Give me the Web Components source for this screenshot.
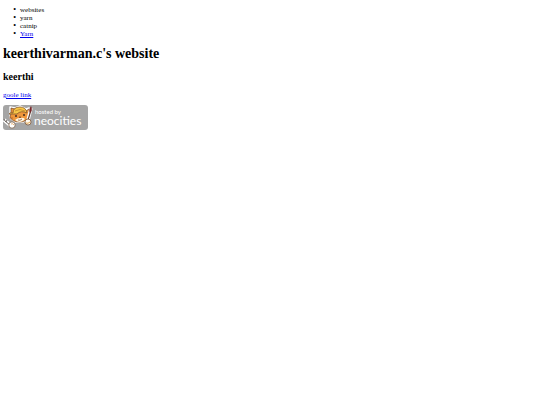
<!DOCTYPE html>
<html lang="en">
<head>
<meta charset="utf-8">
<title>keerthivarman.c's website</title>
<style>
  body {
    margin: 6px 3px;
    background: #fff;
    color: #000;
    font: 7px/8px "Liberation Serif", "Times New Roman", serif;
  }
</style>
</head>
<body>
<home-page>
  <topic-list slot="topics"></topic-list>
  <span slot="title">keerthivarman.c's website</span>
  <span slot="subtitle">keerthi</span>
  <neocities-badge slot="badge"></neocities-badge>
</home-page>

<script>
class TopicList extends HTMLElement {
  constructor() {
    super();
    this.attachShadow({ mode: "open" });
    this.shadowRoot.innerHTML = `
      <style>
        :host { display: block; }
        ul { margin: 0; padding-left: 17px; list-style-type: "•\u00a0\u00a0"; }
        li::marker { font-size: 8px; }
        a { color: #0000ee; }
      </style>
      <ul>
        <li>websites</li>
        <li>yarn</li>
        <li>catnip</li>
        <li><a href="#yarn">Yarn</a></li>
      </ul>
    `;
  }
}

class NeocitiesBadge extends HTMLElement {
  constructor() {
    super();
    this.attachShadow({ mode: "open" });
    this.shadowRoot.innerHTML = `
      <style>
        :host { display: block; }
        a { display: inline-block; vertical-align: top; }
        svg { display: block; }
        text { fill: #fff; font-family: Lato, sans-serif; }
        .small { font-size: 6px; }
        .brand { font-size: 12px; }
      </style>
      <a href="#neocities" aria-label="hosted by neocities">
        <svg width="85" height="25" viewBox="0 0 85 25">
          <rect width="85" height="25" rx="3" fill="#a5a5a5"/>
          <!-- left tool -->
          <path d="M1 15 L7 20" stroke="#fff" stroke-width="3.6"/>
          <path d="M1 14 L2 16 L7 20 M4 15 L3 17" fill="none" stroke="#6a625d" stroke-width="1"/>
          <!-- head -->
          <path d="M7 7 L7 2 L12 3 L17 1 L23 4 L26 3 L26 10 L24 15 L20 17 L12 17 L7 13Z" fill="#fff" stroke="#fff" stroke-width="1.4" stroke-linejoin="round"/>
          <path d="M8 8 L8 3 L12 4 L23 6 L26 4 L26 11 Q23 17 17 17 Q9 17 7 12Z" fill="#ee963b" stroke="#704421" stroke-width=".7"/>
          <!-- cap -->
          <path d="M10 8 Q10 2 17 2 Q23 2 24 8 Q18 5 14 9 L6 9 Q7 7 10 8Z" fill="#f7c747" stroke="#85572a" stroke-width=".8"/>
          <path d="M12 6 Q17 3 22 6" fill="none" stroke="#b87c2d" stroke-width=".7"/>
          <!-- face -->
          <path d="M12 15 Q14 13 17 13 Q20 12 22 14 Q20 17 17 17 Q14 17 12 15Z" fill="#fff4df"/>
          <circle cx="13" cy="11" r="1" fill="#402b20"/>
          <circle cx="21" cy="10" r="1" fill="#402b20"/>
          <path d="M16 12 L18 12 L17 13Z M15 15 Q17 16 19 14" fill="none" stroke="#704421" stroke-width=".7"/>
          <path d="M6 13 L10 13 M24 12 L27 11" stroke="#9e562c" stroke-width=".6"/>
          <!-- paws -->
          <circle cx="9" cy="20" r="3.2" fill="#fff" stroke="#705238" stroke-width=".7"/>
          <path d="M8 19 Q10 18 11 20" fill="none" stroke="#e6a253" stroke-width=".8"/>
          <path d="M28 3 L25 15" stroke="#fff" stroke-width="3.4"/>
          <path d="M28 5 L25 15" stroke="#65453a" stroke-width="1.2"/>
          <path d="M28 1 Q30 5 27 8 Q25 5 28 1Z" fill="#78272a"/>
          <circle cx="25" cy="17" r="3" fill="#fffaf0" stroke="#704421" stroke-width=".7"/>
          <path d="M23 18 Q25 19 27 17" fill="none" stroke="#e5a74d" stroke-width="1"/>
          <text class="small" x="32" y="9">hosted by</text>
          <text class="brand" x="31" y="20">neocities</text>
        </svg>
      </a>
    `;
  }
}

class HomePage extends HTMLElement {
  constructor() {
    super();
    this.attachShadow({ mode: "open" });
    this.shadowRoot.innerHTML = `
      <style>
        :host { display: block; }
        h1 { margin: 8px 0; font-size: 14px; line-height: 16px; }
        h2 { margin: 8px 0; font-size: 10px; line-height: 13px; }
        p { margin: 8px 0 6px; }
        a { color: #0000ee; }
      </style>
      <slot name="topics"></slot>
      <h1><slot name="title"></slot></h1>
      <h2><slot name="subtitle"></slot></h2>
      <p><a href="#google">goole link</a></p>
      <slot name="badge"></slot>
    `;
  }
}

customElements.define("topic-list", TopicList);
customElements.define("neocities-badge", NeocitiesBadge);
customElements.define("home-page", HomePage);
</script>
</body>
</html>
